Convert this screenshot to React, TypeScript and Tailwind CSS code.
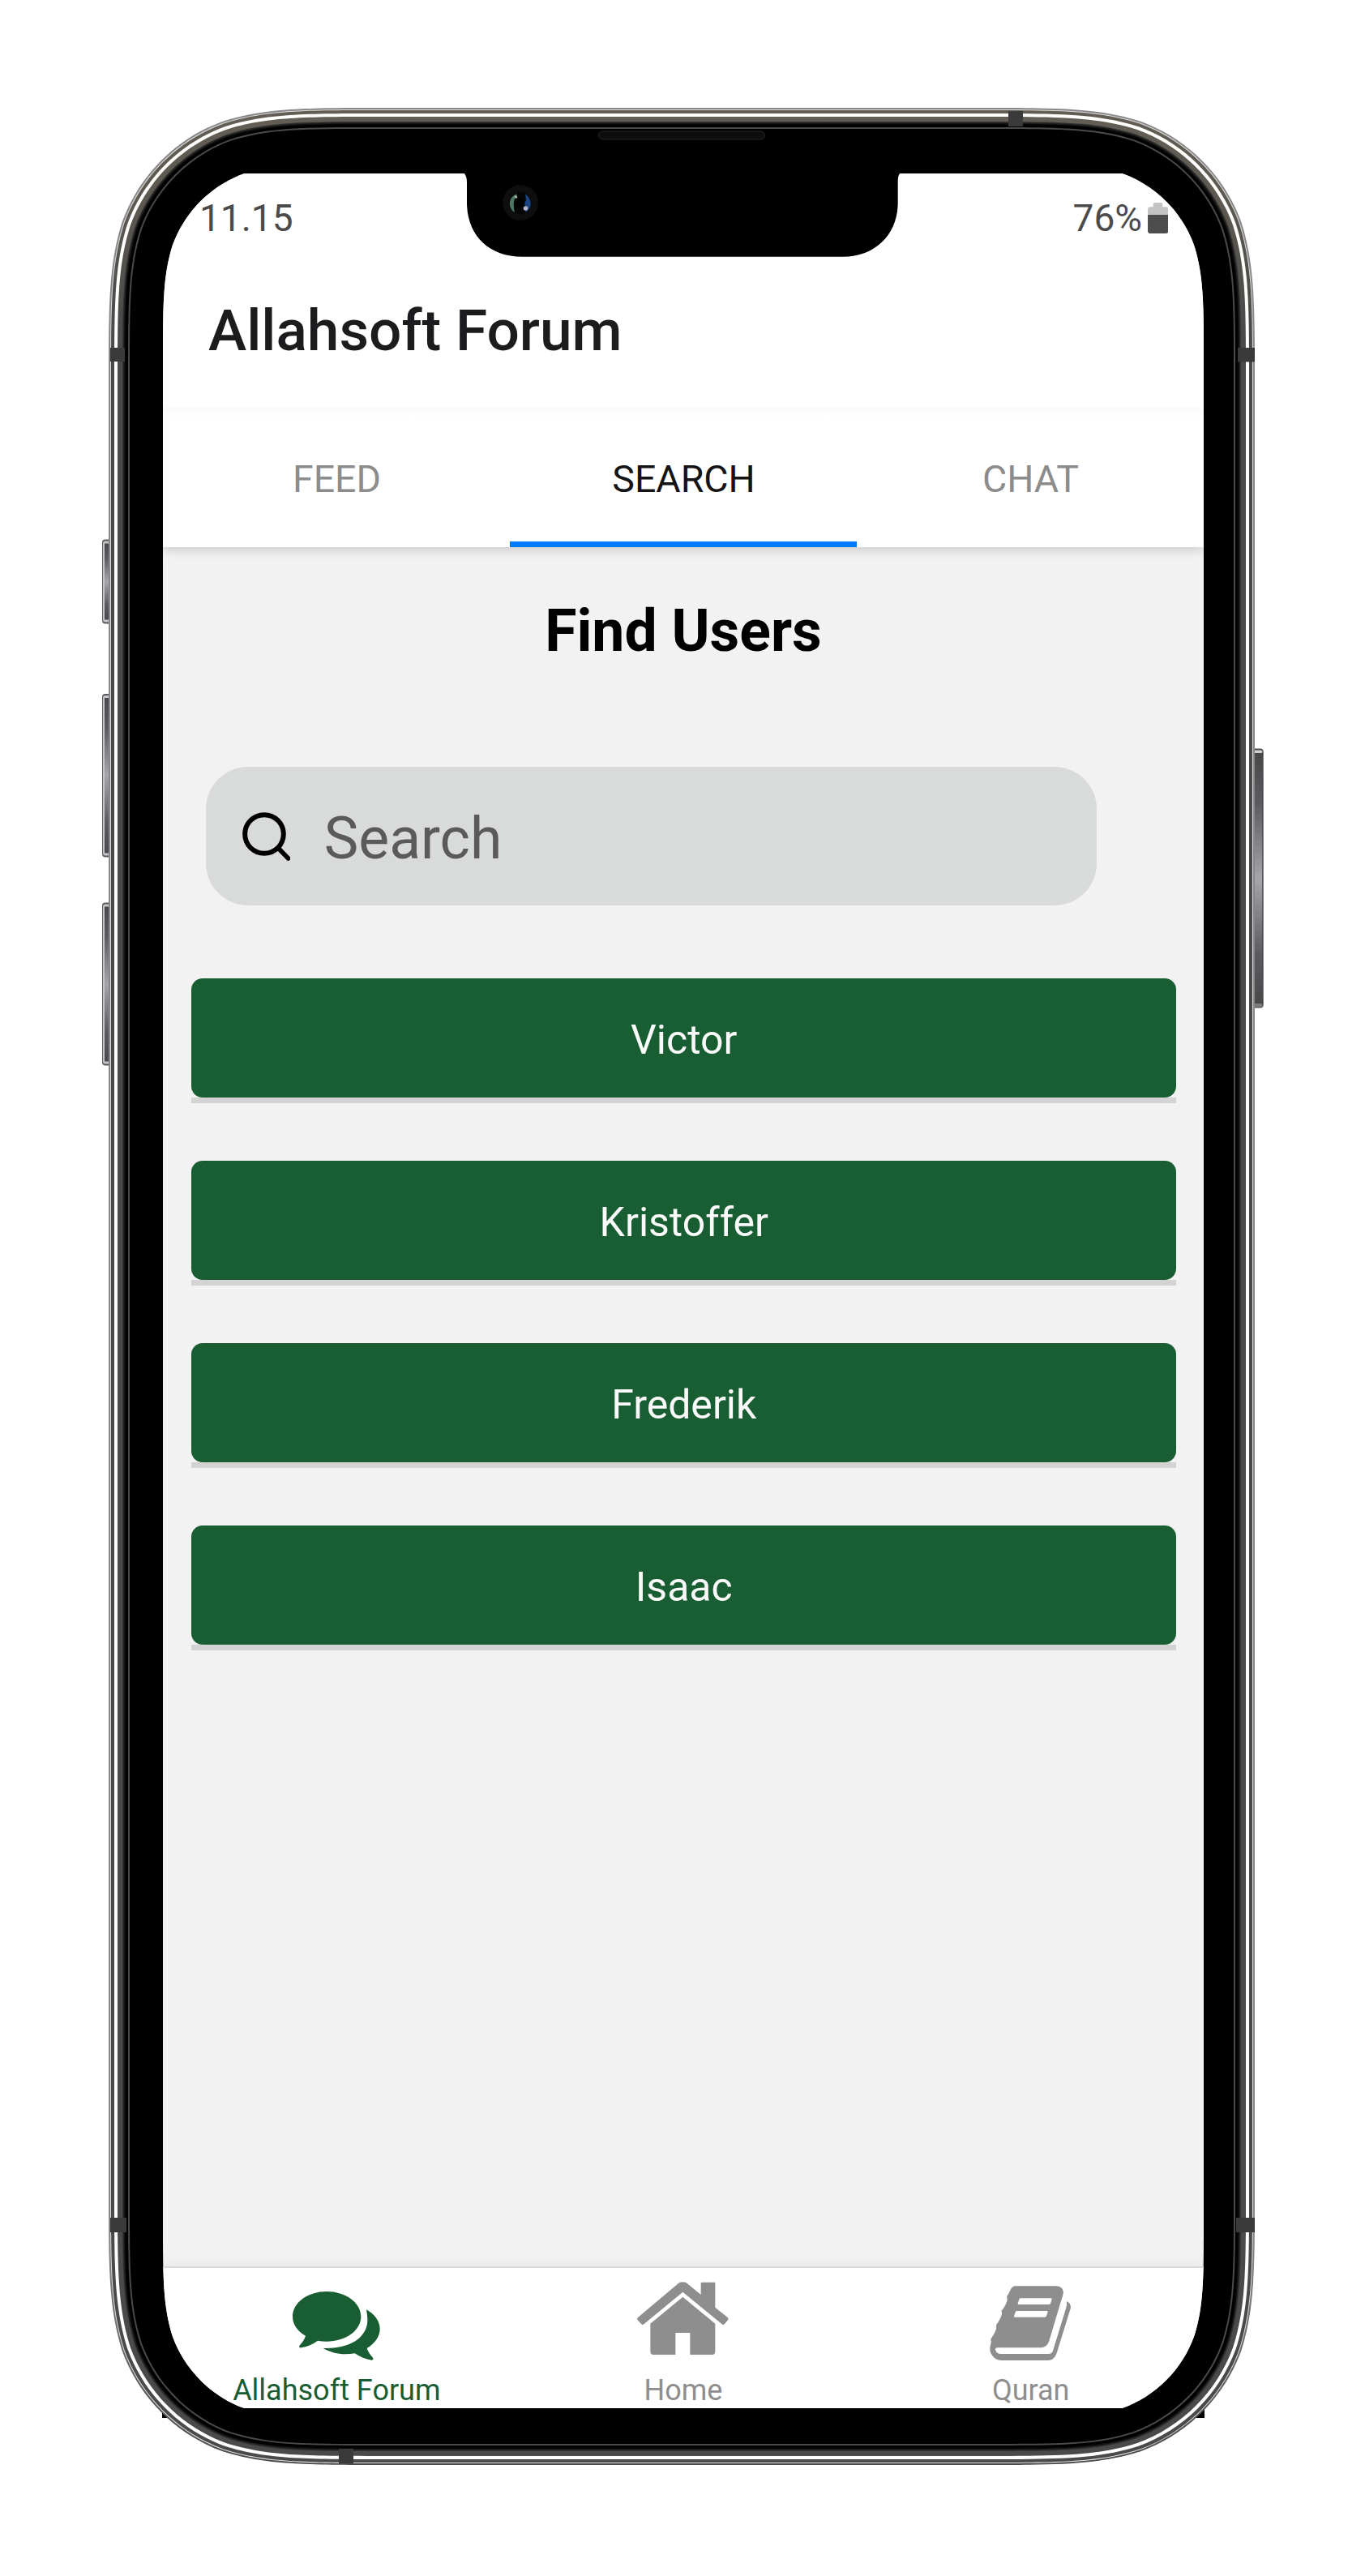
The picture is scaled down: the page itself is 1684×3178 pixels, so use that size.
import type { ReactNode } from "react";

/** Rounded rectangle with continuous (superelliptic) corners. */
function smoothRect(x: number, y: number, w: number, h: number, r: number) {
  const a = 1.52866 * r, b = 1.08849 * r, c = 0.86841 * r, d = 0.63149 * r;
  const e = 0.07491 * r, f = 0.37282 * r, g = 0.16906 * r;
  const X = x + w, Y = y + h;
  return [
    `M${x + a} ${y}H${X - a}`,
    `C${X - b} ${y} ${X - c} ${y} ${X - d} ${y + e}`,
    `C${X - f} ${y + g} ${X - g} ${y + f} ${X - e} ${y + d}`,
    `C${X} ${y + c} ${X} ${y + b} ${X} ${y + a}`,
    `V${Y - a}`,
    `C${X} ${Y - b} ${X} ${Y - c} ${X - e} ${Y - d}`,
    `C${X - g} ${Y - f} ${X - f} ${Y - g} ${X - d} ${Y - e}`,
    `C${X - c} ${Y} ${X - b} ${Y} ${X - a} ${Y}`,
    `H${x + a}`,
    `C${x + b} ${Y} ${x + c} ${Y} ${x + d} ${Y - e}`,
    `C${x + f} ${Y - g} ${x + g} ${Y - f} ${x + e} ${Y - d}`,
    `C${x} ${Y - c} ${x} ${Y - b} ${x} ${Y - a}`,
    `V${y + a}`,
    `C${x} ${y + b} ${x} ${y + c} ${x + e} ${y + d}`,
    `C${x + g} ${y + f} ${x + f} ${y + g} ${x + d} ${y + e}`,
    `C${x + c} ${y} ${x + b} ${y} ${x + a} ${y}Z`,
  ].join("");
}

const LAYERS: [number, string][] = [
  [0, "url(#edge)"],
  [2, "#dcdcda"],
  [3, "url(#steel)"],
  [7, "#fdfdfb"],
  [11, "url(#steel)"],
  [17, "#343332"],
  [18, "#262626"],
  [19, "#141414"],
  [20, "#080808"],
  [21, "#000000"],
  [24, "#4a4a4a"],
  [26, "#000000"],
];

const ANTENNAS = [
  [136, 429, 18, 17],
  [1527, 429, 21, 17.5],
  [136, 2736, 20, 18],
  [1525, 2736, 23, 18],
  [1244, 137, 18, 19],
  [418, 3021, 18, 18],
];

const SIDE_BUTTONS = [
  [126, 665.5, 12, 104],
  [126, 856, 12, 201.5],
  [126, 1113.5, 12, 201],
];

function PhoneBody() {
  return (
    <svg className="absolute inset-0" width="1684" height="3178" viewBox="0 0 1684 3178">
      <defs>
        <linearGradient id="edge" x1="0" y1="0" x2="0" y2="1">
          <stop offset="0" stopColor="#88878a" />
          <stop offset="0.9" stopColor="#87868a" />
          <stop offset="1" stopColor="#4a4a4a" />
        </linearGradient>
        <linearGradient id="steel" x1="0" y1="0" x2="0" y2="1">
          <stop offset="0" stopColor="#625e55" />
          <stop offset="0.04" stopColor="#5c5850" />
          <stop offset="0.09" stopColor="#4a4a4a" />
          <stop offset="1" stopColor="#4a4a4a" />
        </linearGradient>
        <linearGradient id="key" x1="0" y1="0" x2="0" y2="1">
          <stop offset="0" stopColor="#48494b" />
          <stop offset="0.2" stopColor="#5b5c5f" />
          <stop offset="0.5" stopColor="#a5a6a9" />
          <stop offset="0.8" stopColor="#5b5c5f" />
          <stop offset="1" stopColor="#48494b" />
        </linearGradient>
      </defs>
      {SIDE_BUTTONS.map(([x, y, w, h]) => (
        <g key={y}>
          <rect x={x} y={y} width={w} height={h} rx="4" fill="#5a5a5c" />
          <rect x={x + 1} y={y + 2} width={w - 1} height={h - 4} rx="3" fill="#c4c5c6" />
          <rect x={x + 3} y={y + 5} width={w - 3} height={h - 10} fill="url(#key)" />
        </g>
      ))}
      <rect x="1544" y="923.5" width="14.7" height="320" rx="4" fill="#48484a" />
      <rect x="1544" y="925.5" width="13.4" height="3.5" rx="1.5" fill="#d0d0d0" />
      <rect x="1544" y="1238" width="13.4" height="4.5" rx="2" fill="#7c7c7e" />
      <rect x="1544" y="930" width="13.2" height="308" fill="url(#key)" />
      <rect x="200" y="2900" width="1286" height="83" fill="#000" />
      {LAYERS.map(([i, fill]) => (
        <path key={i} d={smoothRect(134 + i, 133 + i, 1414 - 2 * i, 2908 - 2 * i, 223 - i)} fill={fill} />
      ))}
      {ANTENNAS.map(([x, y, w, h]) => (
        <rect key={`${x}-${y}`} x={x} y={y} width={w} height={h} fill="#3a3a3a" />
      ))}
      <rect x="738.5" y="162" width="205" height="10" rx="5" fill="#0d0d0d" stroke="#242424" />
    </svg>
  );
}

function Notch() {
  return (
    <svg className="absolute left-[372px] top-0" width="538" height="104" viewBox="573 214 538 104">
      <path
        d="M573 214C575 217 576 220 576 225V250C576 290 603 316.7 644 316.7H1040C1081 316.7 1107.7 288 1107.7 250V225C1107.7 220 1108 217 1110 214Z"
        fill="#000"
      />
      <circle cx="642" cy="250" r="22" fill="#0e0e0e" />
      <circle cx="642" cy="250.5" r="13.5" fill="#050505" />
      <path d="M637 239.5C627 243 626 257 635 262C633 254 633 246 638 240Z" fill="#4d7562" />
      <path d="M648 239.5C657 245 657 257 648 262C650 256 645 252 649 247Z" fill="#1a4582" />
      <circle cx="636.5" cy="243" r="1.8" fill="#9fb0a8" />
      <circle cx="648.5" cy="257" r="2.8" fill="#b4b5c8" />
      <circle cx="641.5" cy="250.5" r="5" fill="#000" />
    </svg>
  );
}

function BatteryIcon() {
  return (
    <svg width="25.4" height="38" viewBox="0 0 76 114">
      <path d="M20 5Q20 0 25 0H50Q55 0 55 5V16H66Q76 16 76 26V46H0V26Q0 16 10 16H20Z" fill="#c4c4c4" />
      <path d="M0 45H76V104Q76 114 66 114H10Q0 114 0 104Z" fill="#4d4d4d" />
    </svg>
  );
}

function SearchIcon() {
  return (
    <svg width="59.3" height="60" viewBox="236 246 178 180" fill="none" stroke="#000" strokeLinecap="round">
      <circle cx="317" cy="327" r="71.5" strokeWidth="18" />
      <path d="M371 381L406 417" strokeWidth="17" />
    </svg>
  );
}

function CommentsIcon() {
  return (
    <svg width="108" height="85" viewBox="752 531 324 255" fill="currentColor">
      <path d="M878 531C948 531 1005 572 1005 624S948 716 878 716C866 716 855 715 845 713C825 727 805 736 784 739C779 740 775 737 777 732C780 727 793 716 800 695C770 678 752 653 752 624C752 572 808 531 878 531Z" />
      <path d="M1025 598C1054 614 1075 640 1075 669C1075 698 1057 723 1027 741C1034 762 1047 772 1050 778C1051 782 1049 785 1045 785C1022 782 1002 773 982 760C971 762 960 763 948 763C918 763 888 755 865 741C920 743 965 730 993 708C1016 689 1029 665 1029 638C1029 624 1027 612 1025 598Z" />
    </svg>
  );
}

function HomeIcon() {
  return (
    <svg width="113" height="90.3" viewBox="260 135 339 271" fill="currentColor">
      <path d="M263 267L410 143C420 133 438 133 448 143L496 183V141Q496 137 500 137H545Q549 137 549 141V230L595 267Q600 272 596 277L584 291Q579 296 574 292L429 173L285 292Q280 296 275 291L262 277Q258 272 263 267Z" />
      <path d="M429 191L549 290V393Q549 405 537 405H456V324H402V405H321Q309 405 309 393V290Z" />
    </svg>
  );
}

function BookIcon() {
  return (
    <svg width="100.3" height="92.3" viewBox="366 509 301 277" fill="currentColor" fillRule="evenodd">
      <path d="M460 510H612C631 510 643 524 637 543L588 706C581 729 573 738 550 738H396C387 738 386 742 388 748C391 757 398 761 408 761H585C592 761 597 758 600 750L649 590C651 582 652 574 651 566C662 571 668 581 665 594L615 755C610 772 600 785 582 785H410C390 785 375 772 368 752C366 742 367 735 371 720C373 714 368 710 370 706C376 697 386 683 390 668C392 660 388 657 392 651C400 642 409 624 411 612C412 606 407 605 411 600C419 590 430 572 431 560C432 553 427 552 431 546C440 536 443 510 460 510ZM480 555H592Q597 555 596 559L591 574Q590 578 585 578H474Q469 578 470 574L475 560Q476 555 480 555ZM466 602H577Q582 602 581 606L576 621Q575 625 570 625H460Q455 625 456 621L461 607Q462 602 466 602Z" />
    </svg>
  );
}

const TABS = ["FEED", "SEARCH", "CHAT"];
const USERS = ["Victor", "Kristoffer", "Frederik", "Isaac"];

function NavItem({ label, className, children }: { label: string; className: string; children: ReactNode }) {
  return (
    <a className={`flex flex-1 flex-col items-center ${className}`}>
      {children}
      <span className="mt-auto whitespace-nowrap pl-px text-[36px] leading-[43px]">{label}</span>
    </a>
  );
}

export default function App() {
  const screenShape = smoothRect(0, -12, 1284, 2781, 159);
  return (
    <div className="relative h-[3178px] w-[1684px] overflow-hidden bg-white pl-[201px] pt-[214px] font-[Roboto,sans-serif]">
      <PhoneBody />
      <div
        className="relative flex h-[2757px] w-[1284px] flex-col bg-[#f2f2f2]"
        style={{ clipPath: `path("${screenShape}")` }}
      >
        <div className="relative z-10 bg-white shadow-[0_2px_14px_rgba(0,0,0,0.2)]">
          <div className="flex h-[110px] items-center justify-between px-[44px] text-[46px] leading-none text-[#4b4b4b]">
            <span className="pl-px">11.15</span>
            <span className="flex items-center gap-[6.6px]">
              76%
              <BatteryIcon />
            </span>
          </div>
          <header className="flex h-[179px] items-center pb-[11px] pl-[56px]">
            <h1 className="text-[71.2px] font-medium leading-[84px] text-[#1c1c1e]">Allahsoft Forum</h1>
          </header>
          <nav className="flex h-[172px] bg-linear-to-b from-[#fafafa] to-white to-[12px]">
            {TABS.map((tab) => (
              <a
                key={tab}
                className={`flex flex-1 items-center justify-center border-b-[7px] pl-px pt-[12px] text-[46.5px] leading-none ${
                  tab === "SEARCH" ? "border-[#007aff] text-[#141416]" : "border-transparent text-[#8c8c8d]"
                }`}
              >
                {tab}
              </a>
            ))}
          </nav>
        </div>

        <main className="flex flex-1 flex-col pt-[62px]">
          <h2 className="text-center text-[71.5px] font-bold leading-[84px] text-black">Find Users</h2>
          <div className="ml-[52.5px] mt-[125px] flex h-[171px] w-[1099.5px] items-center gap-[42px] rounded-[52px] bg-[#d9dbda] pl-[45px]">
            <SearchIcon />
            <span className="pt-[6px] text-[71.5px] leading-[84px] text-[#5a5a5a]">Search</span>
          </div>
          <ul className="ml-[35px] mr-[34.5px] mt-[89.5px] flex flex-col gap-[71px]">
            {USERS.map((user) => (
              <li key={user} className="h-[154px] border-b-[7px] border-[#d3d3d3]">
                <button className="flex h-[147px] w-full items-center justify-center rounded-[14px] bg-[#195e32] pl-px pt-[5px] text-[50px] leading-none text-[#fafafa]">
                  {user}
                </button>
              </li>
            ))}
          </ul>
        </main>

        <footer className="flex h-[175px] border-t-2 border-[#d9d9d9] bg-white text-[#8e8e8e] shadow-[0_-2px_10px_rgba(0,0,0,0.05)]">
          <NavItem label="Allahsoft Forum" className="pt-[29px] text-[#195e32]">
            <CommentsIcon />
          </NavItem>
          <NavItem label="Home" className="pt-[17px]">
            <HomeIcon />
          </NavItem>
          <NavItem label="Quran" className="pl-px pt-[22px]">
            <BookIcon />
          </NavItem>
        </footer>
        <div className="absolute inset-x-0 top-0 z-20">
          <Notch />
        </div>
      </div>
    </div>
  );
}
